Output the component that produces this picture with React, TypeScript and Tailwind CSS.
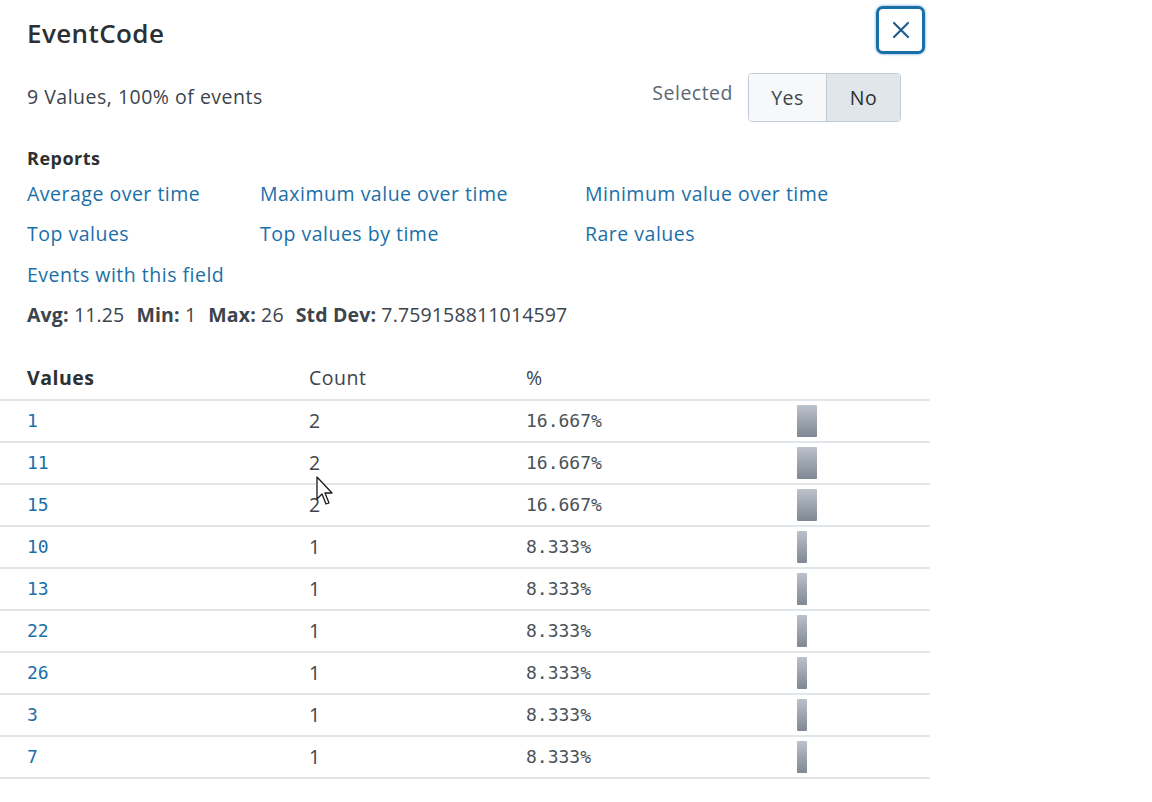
import React from 'react';

interface Row {
  value: string;
  count: number;
  pct: string;
}

const rows: Row[] = [
  { value: '1', count: 2, pct: '16.667%' },
  { value: '11', count: 2, pct: '16.667%' },
  { value: '15', count: 2, pct: '16.667%' },
  { value: '10', count: 1, pct: '8.333%' },
  { value: '13', count: 1, pct: '8.333%' },
  { value: '22', count: 1, pct: '8.333%' },
  { value: '26', count: 1, pct: '8.333%' },
  { value: '3', count: 1, pct: '8.333%' },
  { value: '7', count: 1, pct: '8.333%' },
];

const reports = [
  'Average over time',
  'Maximum value over time',
  'Minimum value over time',
  'Top values',
  'Top values by time',
  'Rare values',
  'Events with this field',
];

const sans = { fontFamily: '"Open Sans", Lato, sans-serif' };
const mono = { fontFamily: '"DejaVu Sans Mono", monospace' };

export default function App() {
  return (
    <div className="relative w-[1152px] h-[802px] bg-white text-[#3c444d]" style={sans}>
      <div className="w-[930px]">
        {/* header */}
        <div className="flex items-center justify-between h-[66px] pl-[27px] pr-[5px]">
          <h2 className="text-[26px] font-semibold tracking-[0.4px] text-[#2b3033]">EventCode</h2>
          <button className="w-[49px] h-[48px] rounded-[7px] border-[3px] border-[#1a6fa8] bg-white flex items-center justify-center shadow-[0_0_3px_#5a9bd0] -mt-[7px]">
            <svg width="18" height="18" viewBox="0 0 18 18" fill="none" stroke="#1f5f8f" strokeWidth="2.2" strokeLinecap="round">
              <path d="M2 2 L16 16 M16 2 L2 16" />
            </svg>
          </button>
        </div>

        <div className="flex items-center justify-between h-[56px] mt-[3px] pl-[27px] pr-[29px] text-[19.5px] tracking-[0.5px]">
          <span>9 Values, 100% of events</span>
          <div className="flex items-center gap-[15px]">
            <span className="text-[#5c6773] -mt-[8px]">Selected</span>
            <div className="flex h-[49px] mt-[1px] rounded-[4px] border border-[#c3cbd4] overflow-hidden">
              <div className="w-[78px] flex items-center justify-center bg-[#f7f8fa] border-r border-[#c3cbd4]">Yes</div>
              <div className="w-[73px] flex items-center justify-center bg-[#e1e6eb] text-[#2b3033]">No</div>
            </div>
          </div>
        </div>

        {/* reports */}
        <div className="pl-[27px] pt-[20px] text-[19.5px] tracking-[0.5px]">
          <div className="text-[18px] font-bold h-[26px] flex items-center text-[#2b3033]">Reports</div>
          <div className="grid grid-cols-[233px_325px_1fr] mt-[2px]">
            {reports.map(r => (
              <a key={r} className="h-[40.5px] flex items-center text-[#1a6fa8] cursor-pointer">
                {r}
              </a>
            ))}
          </div>
          <div className="h-[40px] flex items-center gap-[12px] tracking-[0.15px]">
            <span><b className="font-bold">Avg:</b> 11.25</span>
            <span><b className="font-bold">Min:</b> 1</span>
            <span><b className="font-bold">Max:</b> 26</span>
            <span><b className="font-bold">Std Dev:</b> 7.759158811014597</span>
          </div>
        </div>

        {/* table */}
        <div className="mt-[22px]">
          <div className="grid grid-cols-[282px_217px_271px_1fr] h-[44px] items-center border-b-2 border-[#e1e6eb] text-[19.5px] tracking-[0.5px]">
            <div className="pl-[27px] font-bold text-[#2b3033]">Values</div>
            <div className="pl-[27px]">Count</div>
            <div className="pl-[27px]">%</div>
            <div />
          </div>
          {rows.map(row => (
            <div key={row.value} className="grid grid-cols-[282px_217px_271px_1fr] h-[42px] items-center border-b-2 border-[#e1e6eb]">
              <div className="pl-[27px] text-[18px] text-[#1a6fa8]" style={mono}>{row.value}</div>
              <div className="pl-[27px] text-[19.5px]">{row.count}</div>
              <div className="pl-[27px] text-[18px] text-[#4a525a]" style={mono}>{row.pct}</div>
              <div className="pl-[27px] flex items-center">
                <div
                  className="h-[32px] bg-gradient-to-b from-[#bcc2cb] to-[#7f8892] rounded-[1px]"
                  style={{ width: row.count * 10 }}
                />
              </div>
            </div>
          ))}
        </div>
      </div>

      {/* mouse pointer */}
      <svg className="absolute left-[316px] top-[476px]" width="20" height="32" viewBox="0 0 20 32">
        <path d="M1 1 L1 23 L6 18 L10 28 L13 27 L9 17 L16 17 Z" fill="#ffffff" stroke="#1a1a1a" strokeWidth="1.3" strokeLinejoin="round" />
      </svg>
    </div>
  );
}
